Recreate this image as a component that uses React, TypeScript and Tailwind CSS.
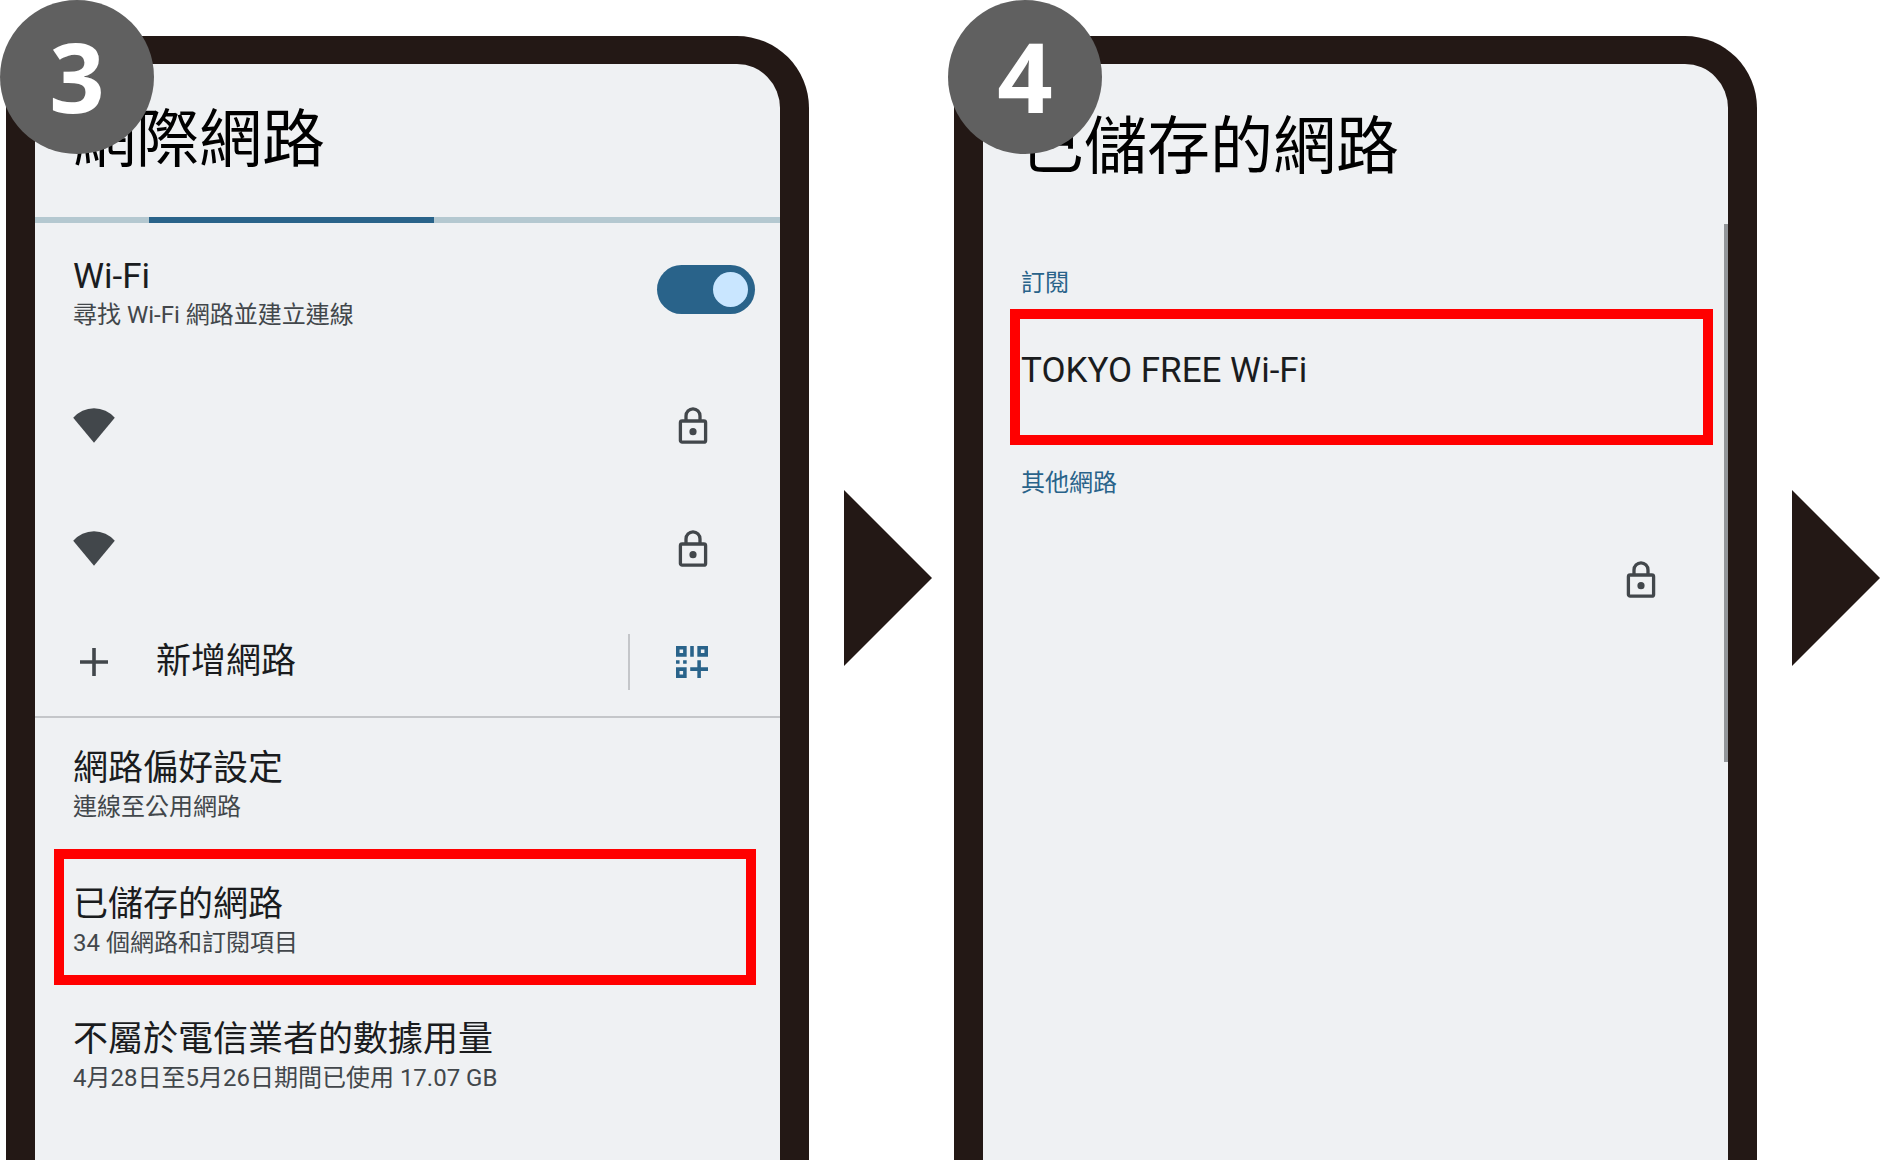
import React, { useState } from "react";

interface TextPairProps {
  title: string;
  detail?: string;
}

const WifiIcon = () => (
  <svg className="w-[42px] h-[35px] shrink-0" viewBox="0 0 42 35" fill="#42474b" aria-hidden="true">
    <path d="M0.2 9.8A27.4 27.4 0 0 1 41.8 9.8L21 34.8Z" />
  </svg>
);

const LockIcon = () => (
  <svg className="w-[30px] h-[37px] shrink-0" viewBox="0 0 30 37" fill="none" aria-hidden="true">
    <rect x="2.4" y="14" width="25.2" height="21.2" rx="1.8" stroke="#42474b" strokeWidth="3.3" />
    <path d="M8 13.5V8.9a7 7 0 0 1 14 0v4.6" stroke="#42474b" strokeWidth="3.3" />
    <circle cx="15" cy="24.7" r="3.6" fill="#42474b" />
  </svg>
);

const PlusIcon = () => (
  <svg className="w-[42px] h-[30px] shrink-0" viewBox="0 0 42 30" aria-hidden="true">
    <path d="M7 15H35M21 1V29" stroke="#42474b" strokeWidth="3.6" />
  </svg>
);

const QrAddIcon = () => (
  <svg className="w-8 h-8" viewBox="0 0 9 9" fill="#29638a" fillRule="evenodd" aria-hidden="true">
    <path d="M0 0h3v3H0ZM1 1v1h1V1Z" />
    <path d="M6 0h3v3H6ZM7 1v1h1V1Z" />
    <path d="M0 6h3v3H0ZM1 7v1h1V7Z" />
    <path d="M4 0h1v3H4ZM0 4h1v1H0ZM2 4h1v1H2Z" />
    <path d="M6 4h1v2h2v1H7v2H6V7H4V6h2Z" />
  </svg>
);

const NextArrow = () => (
  <svg
    className="w-[88px] h-[176px] shrink-0 self-center ml-[35px] mr-0.5 mb-1"
    viewBox="0 0 88 176"
    fill="#231815"
    aria-hidden="true"
  >
    <path d="M0 0L88 88L0 176Z" />
  </svg>
);

const TextPair = ({ title, detail }: TextPairProps) => (
  <span className="block">
    <span className="block text-[35px] leading-[48px] text-[#1a1c1e]">{title}</span>
    {detail && <span className="block text-[24px] leading-[28px] text-[#42474b]">{detail}</span>}
  </span>
);

const Step = ({ number, children }: { number: number; children: React.ReactNode }) => (
  <section className="relative flex flex-1 min-w-0" aria-label={`${number}`}>
    <div className="relative flex-1 min-w-0 mt-9 ml-1.5 border-x-[29px] border-t-[28px] border-[#231815] rounded-t-[72px] bg-[#eff1f3]">
      {children}
    </div>
    <NextArrow />
    <div className="absolute left-0 top-0 size-[154px] pb-1 rounded-full bg-[#606060] text-white flex items-center justify-center font-['Noto_Sans',sans-serif] font-bold text-[97px] leading-[150px]">
      {number}
    </div>
  </section>
);

const InternetScreen = () => {
  const [wifi, setWifi] = useState<boolean>(true);

  return (
    <>
      <h1 className="h-[153px] pt-[38px] pl-[38px] text-[63px] leading-[76px] text-black">網際網路</h1>
      <div className="h-1.5 bg-[#b4c8d0]" role="progressbar" aria-label="網際網路">
        <div className="h-full w-[285px] ml-[114px] bg-[#29638a]"></div>
      </div>
      <label className="flex justify-between h-[141px] pt-[30px] pl-[38px] pr-[25px]">
        <TextPair title="Wi-Fi" detail="尋找 Wi-Fi 網路並建立連線" />
        <input
          type="checkbox"
          role="switch"
          checked={wifi}
          onChange={(e) => setWifi(e.target.checked)}
          className="appearance-none flex items-center mt-3 w-[98px] h-[49px] px-[7px] rounded-full bg-gray-400 checked:bg-[#29638a] checked:justify-end before:block before:size-[35px] before:rounded-full before:bg-[#c9e6ff]"
        />
      </label>
      <ul>
        <li className="flex items-center justify-between h-[123px] pl-[38px] pr-[72px]">
          <WifiIcon />
          <LockIcon />
        </li>
        <li className="flex items-center justify-between h-[123px] pl-[38px] pr-[72px]">
          <WifiIcon />
          <LockIcon />
        </li>
      </ul>
      <div className="flex items-center h-[108px] pb-[3px] pl-[38px] pr-[72px] border-b-2 border-[#c4c6c9]">
        <button className="flex flex-1 items-center gap-[41px] text-left">
          <PlusIcon />
          <TextPair title="新增網路" />
        </button>
        <button aria-label="QR" className="flex items-center h-14 pl-[46px] border-l-2 border-[#c4c6c9]">
          <QrAddIcon />
        </button>
      </div>
      <button className="flex items-start w-full h-[131px] pt-[27px] pl-[38px] text-left">
        <TextPair title="網路偏好設定" detail="連線至公用網路" />
      </button>
      <div className="pl-[19px] pr-6">
        <button className="flex items-start w-full h-[136px] pl-[9px] pt-[22px] text-left border-[10px] border-[#ff0000]">
          <TextPair title="已儲存的網路" detail="34 個網路和訂閱項目" />
        </button>
      </div>
      <button className="flex items-start w-full pt-[31px] pl-[38px] text-left">
        <TextPair title="不屬於電信業者的數據用量" detail="4月28日至5月26日期間已使用 17.07 GB" />
      </button>
    </>
  );
};

const SavedScreen = () => {
  return (
    <>
      <h1 className="h-[201px] pt-[45px] pl-[38px] text-[63px] leading-[76px] text-black">已儲存的網路</h1>
      <h2 className="h-11 pl-[38px] text-[24px] leading-[36px] text-[#29638a]">訂閱</h2>
      <div className="pl-[27px] pr-[15px]">
        <button className="flex items-start w-full h-[136px] pl-px pt-[28px] text-left border-[10px] border-[#ff0000]">
          <TextPair title="TOKYO FREE Wi-Fi" />
        </button>
      </div>
      <h2 className="h-[73px] pt-5 pl-[38px] text-[24px] leading-[36px] text-[#29638a]">其他網路</h2>
      <ul>
        <li className="flex items-center justify-end h-[123px] pr-[72px]">
          <LockIcon />
        </li>
      </ul>
      {/* scroll thumb */}
      <div className="absolute right-0 top-[160px] w-1 h-[538px] bg-[#939699]"></div>
    </>
  );
};

const App = () => {
  return (
    <main className="flex gap-3.5 min-h-screen bg-white overflow-hidden font-['Roboto','Noto_Sans_CJK_TC',sans-serif]">
      <Step number={3}>
        <InternetScreen />
      </Step>
      <Step number={4}>
        <SavedScreen />
      </Step>
    </main>
  );
};

export default App;
